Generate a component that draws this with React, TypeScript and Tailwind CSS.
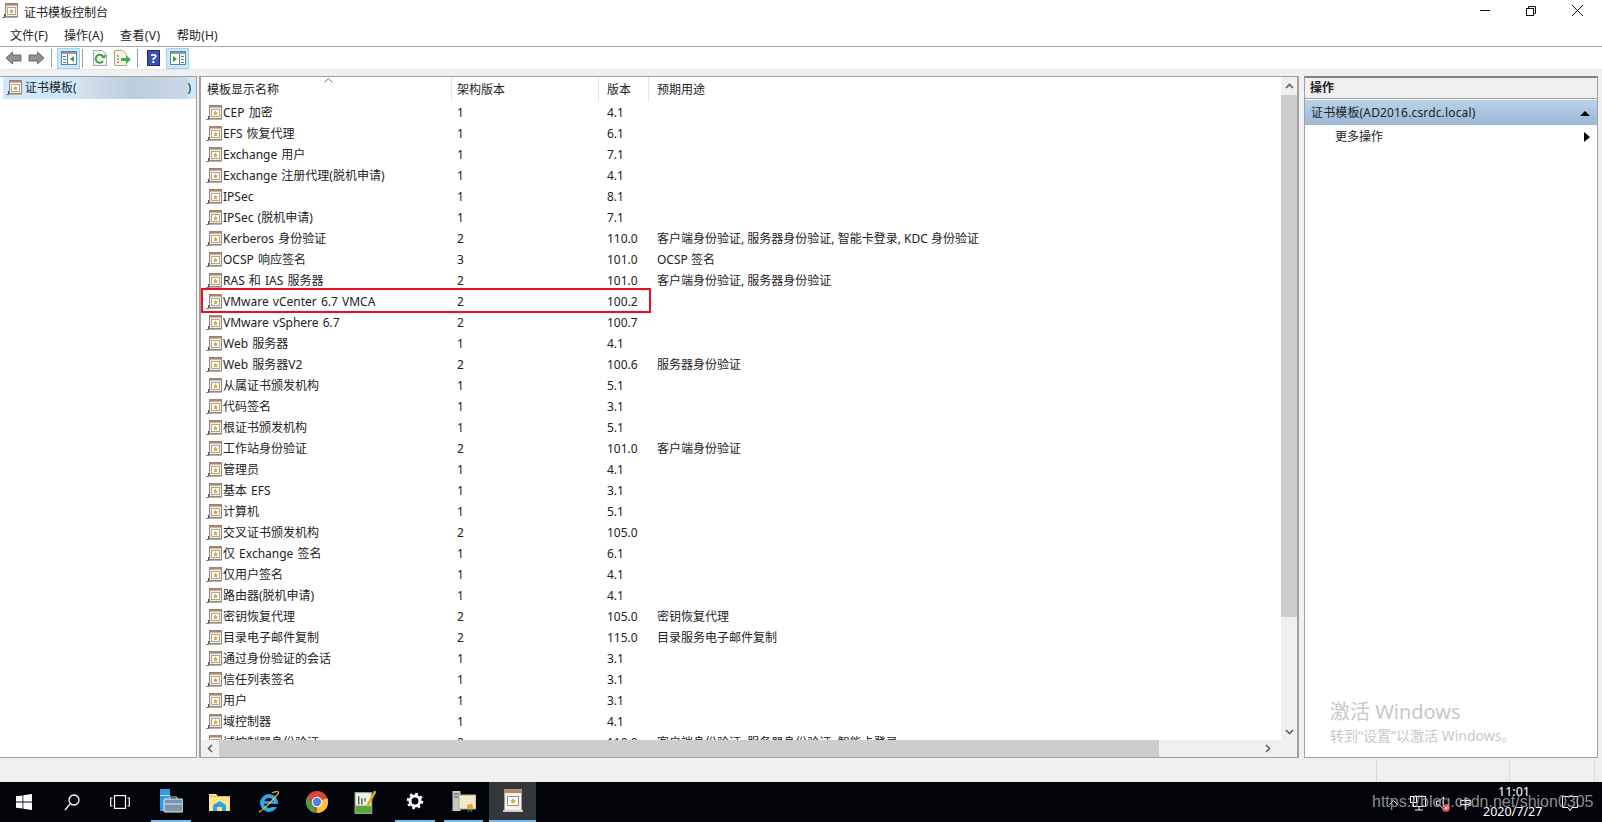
import type { ReactNode } from "react";

type Row = { name: string; schema: string; version: string; purpose?: string };

const rows: Row[] = [
  { name: "CEP 加密", schema: "1", version: "4.1" },
  { name: "EFS 恢复代理", schema: "1", version: "6.1" },
  { name: "Exchange 用户", schema: "1", version: "7.1" },
  { name: "Exchange 注册代理(脱机申请)", schema: "1", version: "4.1" },
  { name: "IPSec", schema: "1", version: "8.1" },
  { name: "IPSec (脱机申请)", schema: "1", version: "7.1" },
  { name: "Kerberos 身份验证", schema: "2", version: "110.0", purpose: "客户端身份验证, 服务器身份验证, 智能卡登录, KDC 身份验证" },
  { name: "OCSP 响应签名", schema: "3", version: "101.0", purpose: "OCSP 签名" },
  { name: "RAS 和 IAS 服务器", schema: "2", version: "101.0", purpose: "客户端身份验证, 服务器身份验证" },
  { name: "VMware vCenter 6.7 VMCA", schema: "2", version: "100.2" },
  { name: "VMware vSphere 6.7", schema: "2", version: "100.7" },
  { name: "Web 服务器", schema: "1", version: "4.1" },
  { name: "Web 服务器V2", schema: "2", version: "100.6", purpose: "服务器身份验证" },
  { name: "从属证书颁发机构", schema: "1", version: "5.1" },
  { name: "代码签名", schema: "1", version: "3.1" },
  { name: "根证书颁发机构", schema: "1", version: "5.1" },
  { name: "工作站身份验证", schema: "2", version: "101.0", purpose: "客户端身份验证" },
  { name: "管理员", schema: "1", version: "4.1" },
  { name: "基本 EFS", schema: "1", version: "3.1" },
  { name: "计算机", schema: "1", version: "5.1" },
  { name: "交叉证书颁发机构", schema: "2", version: "105.0" },
  { name: "仅 Exchange 签名", schema: "1", version: "6.1" },
  { name: "仅用户签名", schema: "1", version: "4.1" },
  { name: "路由器(脱机申请)", schema: "1", version: "4.1" },
  { name: "密钥恢复代理", schema: "2", version: "105.0", purpose: "密钥恢复代理" },
  { name: "目录电子邮件复制", schema: "2", version: "115.0", purpose: "目录服务电子邮件复制" },
  { name: "通过身份验证的会话", schema: "1", version: "3.1" },
  { name: "信任列表签名", schema: "1", version: "3.1" },
  { name: "用户", schema: "1", version: "3.1" },
  { name: "域控制器", schema: "1", version: "4.1" },
  { name: "域控制器身份验证", schema: "2", version: "110.0", purpose: "客户端身份验证, 服务器身份验证, 智能卡登录" },
];

function CertIcon() {
  return (
    <svg width="16" height="16" viewBox="0 0 16 16" className="shrink-0">
      <rect x="3.5" y="0.5" width="12" height="13" fill="#f3efe6" stroke="#9c8672" />
      <rect x="4" y="1" width="11" height="1.5" fill="#a9846a" />
      <rect x="5.5" y="4.5" width="8" height="7" fill="#fff" stroke="#a2a8b0" />
      <path d="M9.5 5.5l.9 1.8 1.6.3-1.2 1.2.3 1.7-1.6-.8-1.6.8.3-1.7L7 7.6l1.6-.3z" fill="#e8a820" />
      <path d="M3 14.5h12.5" stroke="#b8b0a6" />
      <path d="M2.5 11v3.5H.5" fill="none" stroke="#4a5560" />
    </svg>
  );
}

function ToolButton({ children }: { children: ReactNode }) {
  return (
    <div className="flex h-[21px] w-[23px] items-center justify-center border border-[#99d1ff] bg-[#cce8ff]">
      {children}
    </div>
  );
}

function Sep() {
  return <div className="h-[19px] w-px bg-[#a0a0a0]" />;
}

function PaneIcon({ right }: { right?: boolean }) {
  return (
    <svg width="16" height="14" viewBox="0 0 16 14">
      <rect x="0.5" y="0.5" width="15" height="13" fill="#fff" stroke="#6d7c85" />
      <rect x="1" y="1" width="14" height="2" fill="#8b9aa3" />
      {right ? (
        <>
          <rect x="11" y="5" width="3" height="1" fill="#3f7fb0" />
          <rect x="11" y="8" width="3" height="1" fill="#3f7fb0" />
          <rect x="11" y="11" width="3" height="1" fill="#3f7fb0" />
          <path d="M3 5v6l4-3z" fill="#2f9e44" />
          <path d="M9.5 3v10" stroke="#6d7c85" />
        </>
      ) : (
        <>
          <rect x="2" y="5" width="3" height="1" fill="#3f7fb0" />
          <rect x="2" y="8" width="3" height="1" fill="#3f7fb0" />
          <rect x="2" y="11" width="3" height="1" fill="#3f7fb0" />
          <path d="M13 5v6l-4-3z" fill="#2f9e44" />
          <path d="M6.5 3v10" stroke="#6d7c85" />
        </>
      )}
    </svg>
  );
}

function Toolbar() {
  return (
    <div className="flex h-[23px] shrink-0 items-center border-b border-[#e3e3e3] bg-white pl-[5px]">
      <svg width="17" height="14" viewBox="0 0 17 14">
        <path d="M7.5 1L1 7l6.5 6V10H16V4H7.5z" fill="#8f938f" stroke="#6a6e6a" />
      </svg>
      <svg width="17" height="14" viewBox="0 0 17 14" className="ml-[6px]">
        <path d="M9.5 1L16 7l-6.5 6V10H1V4h8.5z" fill="#8f938f" stroke="#6a6e6a" />
      </svg>
      <div className="ml-[6px]">
        <Sep />
      </div>
      <div className="ml-[5px]">
        <ToolButton>
          <PaneIcon />
        </ToolButton>
      </div>
      <div className="ml-[2px]">
        <Sep />
      </div>
      <svg width="14" height="16" viewBox="0 0 14 16" className="ml-[10px]">
        <path d="M.5.5h9l4 4v11H.5z" fill="#f6f6f6" stroke="#a8a8a8" />
        <path d="M10.5 7.5a4 4 0 1 0-.6 3.6" fill="none" stroke="#3aa53a" strokeWidth="2" />
        <path d="M8 8h4.5V4z" fill="#3aa53a" />
      </svg>
      <svg width="18" height="16" viewBox="0 0 18 16" className="ml-[7px]">
        <path d="M.5.5h8l4 4v11H.5z" fill="#f8f4e4" stroke="#b0a890" />
        <path d="M3 6h2M3 9h2M3 12h2" stroke="#555" />
        <path d="M7 8h5V5l5 4.5-5 4.5v-3H7z" fill="#48b048" />
      </svg>
      <div className="ml-[5px]">
        <Sep />
      </div>
      <div className="ml-[9px] flex h-[16px] w-[13px] items-center justify-center border border-[#1d2a78] bg-[#3a50b8] text-[13px] font-bold leading-none text-white">
        ?
      </div>
      <div className="ml-[6px]">
        <ToolButton>
          <PaneIcon right />
        </ToolButton>
      </div>
    </div>
  );
}

function ListHeader() {
  return (
    <div className="relative flex h-[25px] shrink-0 items-center text-[12px] text-[#222]">
      <div className="flex h-full w-[251px] items-center border-r border-[#e5e5e5] pl-[6px]">模板显示名称</div>
      <div className="flex h-full w-[147px] items-center border-r border-[#e5e5e5] pl-[5px]">架构版本</div>
      <div className="flex h-full w-[50px] items-center border-r border-[#e5e5e5] pl-[8px]">版本</div>
      <div className="flex h-full flex-1 items-center pl-[8px]">预期用途</div>
      <svg width="9" height="5" viewBox="0 0 9 5" className="absolute left-[123px] top-[1px]">
        <path d="M.5 4.5l4-4 4 4" fill="none" stroke="#777" />
      </svg>
    </div>
  );
}

function ListRow({ row }: { row: Row }) {
  const marked = row.name === "VMware vCenter 6.7 VMCA";
  return (
    <div className="relative flex h-[21px] shrink-0 items-center text-[12px] text-[#222]">
      <div className="flex w-[251px] items-center gap-[1px] pl-[5px] [word-spacing:1px]">
        <CertIcon />
        <span className="whitespace-nowrap">{row.name}</span>
      </div>
      <div className="w-[147px] pl-[5px]">{row.schema}</div>
      <div className="w-[50px] pl-[8px]">{row.version}</div>
      <div className="flex-1 whitespace-nowrap pl-[8px]">{row.purpose}</div>
      {marked && (
        <div className="absolute left-0 top-[-3px] h-[25px] w-[450px] border-2 border-[#e81123]" />
      )}
    </div>
  );
}

function CenterPane() {
  return (
    <div className="ml-[2px] flex min-h-0 w-[1100px] flex-col border-y border-l-2 border-r-2 border-[#a0a0a0] bg-white">
      <div className="flex min-h-0 flex-1">
        <div className="flex min-h-0 min-w-0 flex-1 flex-col overflow-hidden">
          <ListHeader />
          {rows.map((r) => (
            <ListRow key={r.name} row={r} />
          ))}
        </div>
        <div className="flex w-[16px] shrink-0 flex-col bg-[#f0f0f0]">
          <div className="flex h-[18px] items-center justify-center">
            <svg width="9" height="6" viewBox="0 0 9 6">
              <path d="M1 5l3.5-3.5L8 5" fill="none" stroke="#606060" strokeWidth="1.6" />
            </svg>
          </div>
          <div className="h-[522px] bg-[#cdcdcd]" />
          <div className="flex-1" />
          <div className="flex h-[16px] items-center justify-center">
            <svg width="9" height="6" viewBox="0 0 9 6">
              <path d="M1 1l3.5 3.5L8 1" fill="none" stroke="#606060" strokeWidth="1.6" />
            </svg>
          </div>
        </div>
      </div>
      <div className="flex h-[17px] shrink-0 items-center bg-[#f0f0f0]">
        <div className="flex w-[18px] items-center justify-center">
          <svg width="6" height="9" viewBox="0 0 6 9">
            <path d="M5 1L1.5 4.5 5 8" fill="none" stroke="#606060" strokeWidth="1.6" />
          </svg>
        </div>
        <div className="h-full w-[940px] bg-[#cdcdcd]" />
        <div className="flex-1" />
        <div className="flex w-[34px] items-center justify-start pl-[2px]">
          <svg width="6" height="9" viewBox="0 0 6 9">
            <path d="M1 1l3.5 3.5L1 8" fill="none" stroke="#606060" strokeWidth="1.6" />
          </svg>
        </div>
      </div>
    </div>
  );
}

function ActionsPane() {
  return (
    <div className="relative ml-[5px] flex w-[294px] flex-col border-x border-b border-[#a0a0a0] border-t-2 border-t-[#808080] bg-white text-[12px] text-[#222]">
      <div className="flex h-[21px] items-center border-b border-[#a0a0a0] bg-[#f0f0f0] pl-[5px] font-bold">操作</div>
      <div className="mt-px flex h-[25px] items-center justify-between bg-gradient-to-b from-[#bad3ea] to-[#9cb7d5] pl-[6px] pr-[7px] tracking-[0.15px]">
        <span>证书模板(AD2016.csrdc.local)</span>
        <svg width="10" height="6" viewBox="0 0 10 6">
          <path d="M0 6l5-5 5 5z" fill="#000" />
        </svg>
      </div>
      <div className="flex h-[23px] items-center justify-between pl-[30px] pr-[7px]">
        <span>更多操作</span>
        <svg width="6" height="10" viewBox="0 0 6 10">
          <path d="M0 0l6 5-6 5z" fill="#000" />
        </svg>
      </div>
      <div className="absolute left-[25px] top-[620px] whitespace-nowrap text-[#c8c8c8]">
        <div className="text-[20px] leading-[28px]">激活 Windows</div>
        <div className="text-[14px] leading-[20px]">转到“设置”以激活 Windows。</div>
      </div>
    </div>
  );
}

function Taskbar() {
  return (
    <div className="relative flex h-[40px] shrink-0 items-center bg-[#02040a] text-white">
      <div className="flex w-[48px] justify-center">
        <svg width="16" height="16" viewBox="0 0 16 16" fill="#fff">
          <path d="M0 2.3l6.5-.9v6.2H0zM7.3 1.3L16 0v7.6H7.3zM0 8.4h6.5v6.2L0 13.7zM7.3 8.4H16V16l-8.7-1.3z" />
        </svg>
      </div>
      <div className="flex w-[48px] justify-center">
        <svg width="16" height="17" viewBox="0 0 16 17" fill="none" stroke="#fff" strokeWidth="1.3">
          <circle cx="10" cy="6" r="5" />
          <path d="M6.4 9.6L1 16" />
        </svg>
      </div>
      <div className="flex w-[48px] justify-center">
        <svg width="20" height="14" viewBox="0 0 20 14" fill="none" stroke="#fff" strokeWidth="1.2">
          <rect x="4.5" y="0.6" width="11" height="12.8" />
          <path d="M2.5 3H.7v8h1.8M17.5 3h1.8v8h-1.8" />
        </svg>
      </div>
      <div className="ml-[7px] flex h-full w-[40px] items-center justify-center border-b-2 border-[#76b9ed]">
        <svg width="24" height="24" viewBox="0 0 24 24">
          <rect x="1" y="0" width="10" height="22" fill="#2f9be6" />
          <rect x="1" y="6" width="10" height="1" fill="#bfe3fa" />
          <rect x="5" y="10" width="19" height="13" rx="1" fill="#7b96ac" stroke="#e8eef2" />
          <path d="M11 10V8h7v2" fill="none" stroke="#c9d4dc" />
          <path d="M5 15h19" stroke="#dfe7ec" />
        </svg>
      </div>
      <div className="ml-[4px] flex w-[49px] justify-center">
        <svg width="21" height="18" viewBox="0 0 21 18">
          <path d="M0 1h7l2 2h12v15H0z" fill="#ffe48d" />
          <rect x="0" y="3" width="21" height="1" fill="#e3b94f" />
          <path d="M4 18v-6l6.5-4 6.5 4v6h-4v-4H8v4z" fill="#2ea2e6" />
        </svg>
      </div>
      <div className="flex w-[49px] justify-center">
        <svg width="22" height="23" viewBox="0 0 22 23" fill="none">
          <circle cx="11" cy="12" r="7" stroke="#2ea9e8" strokeWidth="4" />
          <path d="M5 11.5h13" stroke="#2ea9e8" strokeWidth="2.5" />
          <path d="M14 14.5h6" stroke="#02040a" strokeWidth="3" />
          <path d="M2 20C-1 23 6 19 20 3c2-3-2-3-6-1" stroke="#e3b23c" strokeWidth="1.2" />
        </svg>
      </div>
      <div className="flex w-[48px] justify-center">
        <svg width="22" height="22" viewBox="0 0 21 21">
          <circle cx="10.5" cy="10.5" r="10.5" fill="#db4437" />
          <path d="M10.5 21A10.5 10.5 0 0 0 20.3 6.6L10.5 10.5z" fill="#fbc02d" />
          <path d="M10.5 21a10.5 10.5 0 0 1-9.3-15.4l5 8z" fill="#43a047" />
          <circle cx="10.5" cy="10.5" r="5" fill="#fff" />
          <circle cx="10.5" cy="10.5" r="4" fill="#4a84e8" />
        </svg>
      </div>
      <div className="flex w-[49px] justify-center">
        <svg width="23" height="25" viewBox="0 0 21 24">
          <rect x="0.5" y="2.5" width="16" height="20" fill="#eef3e6" stroke="#9aa890" />
          <rect x="1" y="15" width="15" height="7" fill="#58a838" />
          <path d="M4 6v8M7 8v6M10 8v3" stroke="#444" strokeWidth="1.2" />
          <path d="M12 16L20 1" stroke="#d9a520" strokeWidth="2.5" />
        </svg>
      </div>
      <div className="ml-[5px] flex h-full w-[40px] items-center justify-center border-b-2 border-[#76b9ed]">
        <svg width="18" height="18" viewBox="0 0 18 18" fill="none">
          <circle cx="9" cy="9" r="5" stroke="#fff" strokeWidth="3" />
          <circle cx="9" cy="9" r="7" stroke="#fff" strokeWidth="2.5" strokeDasharray="2.6 2.9" />
        </svg>
      </div>
      <div className="ml-[9px] flex h-full w-[39px] items-center justify-center border-b-2 border-[#76b9ed]">
        <svg width="24" height="23" viewBox="0 0 24 23">
          <rect x="0.5" y="1" width="8" height="20" fill="#c6c6c2" />
          <path d="M2 4h5M2 7h5" stroke="#555" />
          <rect x="7" y="5" width="17" height="14" fill="#f1e8cf" stroke="#b8aa88" />
          <circle cx="18" cy="17" r="3" fill="#e6a820" />
          <path d="M16.5 19v3M19.5 19v3" stroke="#2f62b0" strokeWidth="1.5" />
        </svg>
      </div>
      <div className="ml-[6px] flex h-full w-[47px] items-center justify-center border-b-2 border-[#76b9ed] bg-[#34373a]">
        <svg width="20" height="24" viewBox="0 0 20 24">
          <rect x="1.5" y="0.5" width="17" height="21" fill="#f7f3ea" stroke="#b09a86" />
          <rect x="2" y="1" width="16" height="3" fill="#b08a6a" />
          <rect x="4.5" y="7.5" width="11" height="9" fill="#fff" stroke="#8a96a2" />
          <path d="M10 9l1 2 2 .3-1.5 1.4.4 2-1.9-1-1.9 1 .4-2L7 11.3l2-.3z" fill="#e8a820" />
          <path d="M0 22h20" stroke="#d8d0c6" strokeWidth="2" />
        </svg>
      </div>

      {/* tray, the blog watermark sits across it in the screenshot */}
      <div className="absolute left-[1389px] top-[18px]">
        <svg width="9" height="5" viewBox="0 0 9 5">
          <path d="M.5 4.5l4-4 4 4" fill="none" stroke="#fff" />
        </svg>
      </div>
      <div className="absolute left-[1410px] top-[14px]">
        <svg width="16" height="15" viewBox="0 0 16 15" fill="none" stroke="#fff">
          <rect x="0.5" y="0.5" width="6" height="6" />
          <rect x="3.5" y="0.5" width="12" height="10" />
          <path d="M5 14h8M9 11v3" />
        </svg>
      </div>
      <div className="absolute left-[1436px] top-[14px]">
        <svg width="16" height="18" viewBox="0 0 16 18">
          <path d="M.5 5h3l4-4v12l-4-4h-3z" fill="none" stroke="#fff" />
          <circle cx="10" cy="12" r="4" fill="#e8344a" />
          <path d="M8.5 10.5l3 3M11.5 10.5l-3 3" stroke="#fff" />
        </svg>
      </div>
      <div className="absolute left-[1459px] top-[12px] text-[13px] leading-[18px]">中</div>
      <div className="absolute left-[1498px] top-[0px] text-[12.5px] leading-[20px]">11:01</div>
      <div className="absolute left-[1483px] top-[21px] whitespace-nowrap text-[12.5px] leading-[18px]">2020/7/27</div>
      <div className="absolute left-[1562px] top-[14px]">
        <svg width="16" height="16" viewBox="0 0 16 16" fill="none" stroke="#fff">
          <path d="M.5.5h15v11H10l-2 3-2-3H.5z" />
        </svg>
      </div>
      <div className="absolute left-[1372px] top-[10px] whitespace-nowrap font-['Liberation_Sans'] text-[16px] leading-[20px] text-[#a0a0a0]/90">
        https://blog.csdn.net/shion0305
      </div>
    </div>
  );
}

export default function App() {
  return (
    <div
      className="flex h-[822px] w-[1602px] flex-col overflow-hidden bg-white text-[12px] text-[#222]"
      style={{ fontFamily: '"Noto Sans", "Noto Sans CJK SC", sans-serif' }}
    >
      {/* title bar */}
      <div className="flex h-[25px] shrink-0 items-center justify-between">
        <div className="flex items-center gap-[6px] pl-[2px]">
          <div className="relative top-[-2px]">
            <CertIcon />
          </div>
          <span className="text-[12px]">证书模板控制台</span>
        </div>
        <div className="flex items-center self-start pr-[2px] pt-[5px]">
          <div className="flex h-[10px] w-[46px] items-center justify-center">
            <div className="h-px w-[10px] bg-[#111]" />
          </div>
          <div className="flex w-[46px] justify-center">
            <svg width="10" height="10" viewBox="0 0 10 10" fill="none" stroke="#111">
              <path d="M2.5 2.5v-2h7v7h-2" />
              <rect x="0.5" y="2.5" width="7" height="7" />
            </svg>
          </div>
          <div className="flex w-[46px] justify-center">
            <svg width="11" height="11" viewBox="0 0 11 11" stroke="#111">
              <path d="M0 0l11 11M11 0L0 11" />
            </svg>
          </div>
        </div>
      </div>

      {/* menu */}
      <div className="flex h-[22px] shrink-0 items-center border-b border-[#a8a8a8] pl-[10px]">
        <span className="w-[54px] tracking-[0.1px]">文件(F)</span>
        <span className="w-[56px] tracking-[0.1px]">操作(A)</span>
        <span className="w-[57px] tracking-[0.4px]">查看(V)</span>
        <span className="tracking-[0.1px]">帮助(H)</span>
      </div>

      <Toolbar />

      <div className="flex min-h-0 flex-1 bg-[#f0f0f0] pt-[6px] pb-[2px]">
        <div className="flex w-[197px] flex-col border-y border-r border-[#a0a0a0] bg-white">
          <div className="ml-[3px] flex h-[22px] items-center bg-[#cce8ff] pl-[3px]">
            <CertIcon />
            <span className="ml-[3px]">证书模板(</span>
            <div className="h-full w-[111px] bg-gradient-to-r from-[#d3e2ee] via-[#bccddd] to-[#c9d8e6]" />
            <span>)</span>
          </div>
        </div>
        <CenterPane />
        <ActionsPane />
      </div>

      {/* status bar */}
      <div className="flex h-[22px] shrink-0 bg-[#f0f0f0]">
        <div className="w-[1377px] border-r border-[#d9d9d9]" />
        <div className="w-[133px] border-r border-[#d9d9d9]" />
        <div className="w-[85px] border-r border-[#d9d9d9]" />
      </div>

      <Taskbar />
    </div>
  );
}
